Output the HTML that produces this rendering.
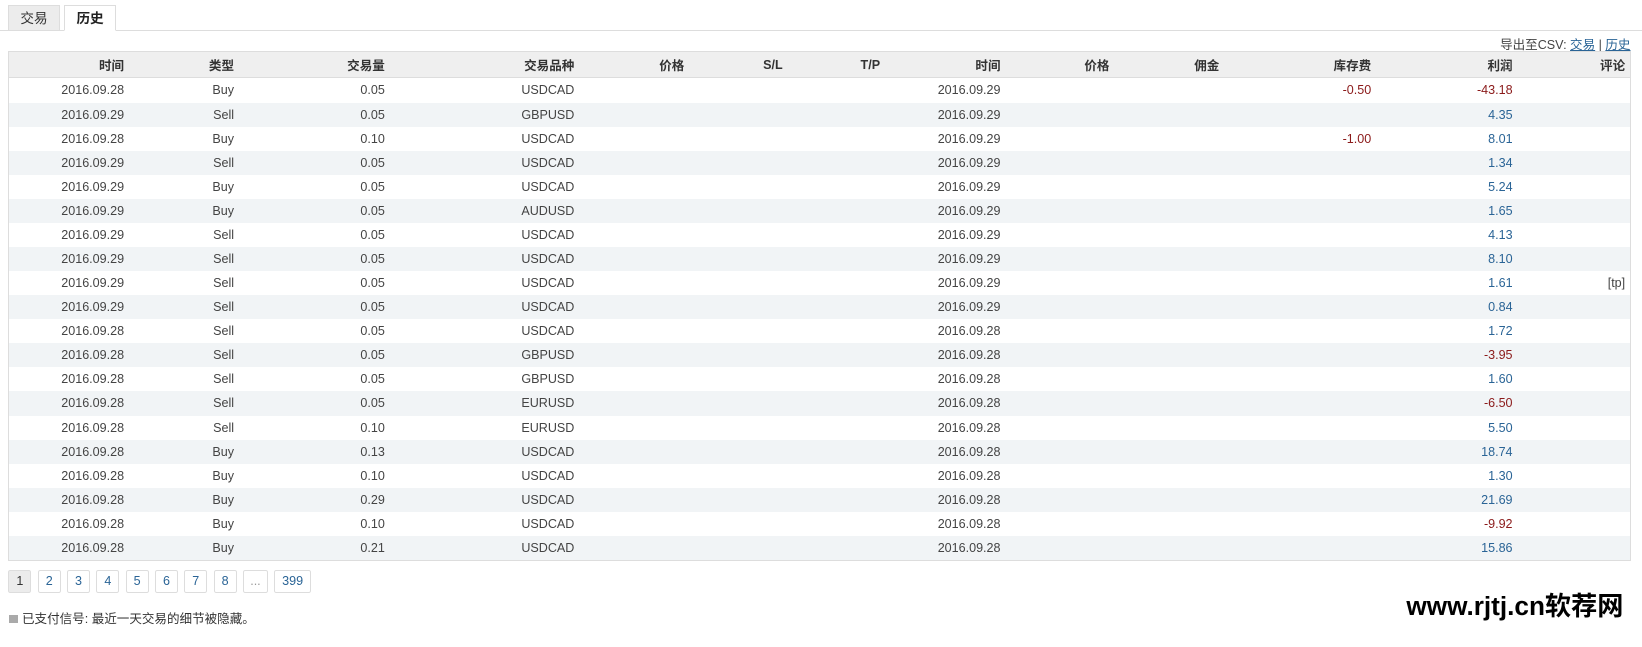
<!DOCTYPE html>
<html><head><meta charset="utf-8"><style>
html,body{margin:0;padding:0;background:#fff;}
body{zoom:1.04719;width:1568px;height:618px;position:relative;overflow:hidden;font-family:"Liberation Sans","Noto Sans CJK SC",sans-serif;font-size:12px;color:#444;}
.tab{position:absolute;top:5px;height:24px;line-height:24px;text-align:center;font-size:13px;box-sizing:border-box;}
.t1{left:8px;width:49px;background:#ececec;border:1px solid #ddd;border-bottom:none;color:#333;}
.t2{left:61px;width:50px;background:#fff;border:1px solid #ddd;border-bottom:1px solid #fff;font-weight:bold;color:#222;z-index:2;height:25px;}
.line{position:absolute;left:0;top:29px;width:1568px;height:1px;background:#ddd;}
.exp{position:absolute;right:11px;top:32px;color:#444;}
.exp a{color:#2a6496;text-decoration:underline;}
table{position:absolute;left:8px;top:49px;border-collapse:collapse;table-layout:fixed;width:1549px;border:1px solid #ddd;}
td,th{text-align:right;padding:0 5px 0 0;white-space:nowrap;overflow:hidden;}
th{height:24px;background:#efefef;border-bottom:1px solid #ddd;font-weight:bold;color:#333;}
td{height:23px;color:#444;}
tr:nth-child(odd) td{background:#f1f4f6;}
.n{color:#8b1a1a;}.p{color:#2a6496;}
.pg{position:absolute;top:544px;left:8px;white-space:nowrap;}
.pg span{display:inline-block;box-sizing:border-box;height:22px;line-height:20px;width:22px;text-align:center;border:1px solid #ddd;border-radius:2px;margin-right:6px;color:#2a6496;font-size:12px;}
.pg span.a{background:#ececec;color:#333;}
.note{position:absolute;left:9px;top:581px;color:#333;}
.ic{display:inline-block;width:8px;height:8px;background:#aaa;margin-right:4px;vertical-align:0;}
.wm{position:absolute;left:1343px;top:559px;font-size:25px;font-weight:bold;color:#000;font-family:"Liberation Sans","Noto Sans CJK SC",sans-serif;white-space:nowrap;letter-spacing:0px;}
</style></head><body>
<div class="line"></div>
<div class="tab t1">交易</div>
<div class="tab t2">历史</div>
<div class="exp">导出至CSV: <a>交易</a> | <a>历史</a></div>
<table>
<colgroup><col style="width:115px"><col style="width:105px"><col style="width:144px"><col style="width:181px"><col style="width:105px"><col style="width:94px"><col style="width:93px"><col style="width:115px"><col style="width:104px"><col style="width:105px"><col style="width:145px"><col style="width:135px"><col style="width:108px"></colgroup>
<tr><th>时间</th><th>类型</th><th>交易量</th><th>交易品种</th><th>价格</th><th>S/L</th><th>T/P</th><th>时间</th><th>价格</th><th>佣金</th><th>库存费</th><th>利润</th><th>评论</th></tr>
<tr><td>2016.09.28</td><td>Buy</td><td>0.05</td><td>USDCAD</td><td></td><td></td><td></td><td>2016.09.29</td><td></td><td></td><td class="n">-0.50</td><td class="n">-43.18</td><td></td></tr>
<tr><td>2016.09.29</td><td>Sell</td><td>0.05</td><td>GBPUSD</td><td></td><td></td><td></td><td>2016.09.29</td><td></td><td></td><td></td><td class="p">4.35</td><td></td></tr>
<tr><td>2016.09.28</td><td>Buy</td><td>0.10</td><td>USDCAD</td><td></td><td></td><td></td><td>2016.09.29</td><td></td><td></td><td class="n">-1.00</td><td class="p">8.01</td><td></td></tr>
<tr><td>2016.09.29</td><td>Sell</td><td>0.05</td><td>USDCAD</td><td></td><td></td><td></td><td>2016.09.29</td><td></td><td></td><td></td><td class="p">1.34</td><td></td></tr>
<tr><td>2016.09.29</td><td>Buy</td><td>0.05</td><td>USDCAD</td><td></td><td></td><td></td><td>2016.09.29</td><td></td><td></td><td></td><td class="p">5.24</td><td></td></tr>
<tr><td>2016.09.29</td><td>Buy</td><td>0.05</td><td>AUDUSD</td><td></td><td></td><td></td><td>2016.09.29</td><td></td><td></td><td></td><td class="p">1.65</td><td></td></tr>
<tr><td>2016.09.29</td><td>Sell</td><td>0.05</td><td>USDCAD</td><td></td><td></td><td></td><td>2016.09.29</td><td></td><td></td><td></td><td class="p">4.13</td><td></td></tr>
<tr><td>2016.09.29</td><td>Sell</td><td>0.05</td><td>USDCAD</td><td></td><td></td><td></td><td>2016.09.29</td><td></td><td></td><td></td><td class="p">8.10</td><td></td></tr>
<tr><td>2016.09.29</td><td>Sell</td><td>0.05</td><td>USDCAD</td><td></td><td></td><td></td><td>2016.09.29</td><td></td><td></td><td></td><td class="p">1.61</td><td>[tp]</td></tr>
<tr><td>2016.09.29</td><td>Sell</td><td>0.05</td><td>USDCAD</td><td></td><td></td><td></td><td>2016.09.29</td><td></td><td></td><td></td><td class="p">0.84</td><td></td></tr>
<tr><td>2016.09.28</td><td>Sell</td><td>0.05</td><td>USDCAD</td><td></td><td></td><td></td><td>2016.09.28</td><td></td><td></td><td></td><td class="p">1.72</td><td></td></tr>
<tr><td>2016.09.28</td><td>Sell</td><td>0.05</td><td>GBPUSD</td><td></td><td></td><td></td><td>2016.09.28</td><td></td><td></td><td></td><td class="n">-3.95</td><td></td></tr>
<tr><td>2016.09.28</td><td>Sell</td><td>0.05</td><td>GBPUSD</td><td></td><td></td><td></td><td>2016.09.28</td><td></td><td></td><td></td><td class="p">1.60</td><td></td></tr>
<tr><td>2016.09.28</td><td>Sell</td><td>0.05</td><td>EURUSD</td><td></td><td></td><td></td><td>2016.09.28</td><td></td><td></td><td></td><td class="n">-6.50</td><td></td></tr>
<tr><td>2016.09.28</td><td>Sell</td><td>0.10</td><td>EURUSD</td><td></td><td></td><td></td><td>2016.09.28</td><td></td><td></td><td></td><td class="p">5.50</td><td></td></tr>
<tr><td>2016.09.28</td><td>Buy</td><td>0.13</td><td>USDCAD</td><td></td><td></td><td></td><td>2016.09.28</td><td></td><td></td><td></td><td class="p">18.74</td><td></td></tr>
<tr><td>2016.09.28</td><td>Buy</td><td>0.10</td><td>USDCAD</td><td></td><td></td><td></td><td>2016.09.28</td><td></td><td></td><td></td><td class="p">1.30</td><td></td></tr>
<tr><td>2016.09.28</td><td>Buy</td><td>0.29</td><td>USDCAD</td><td></td><td></td><td></td><td>2016.09.28</td><td></td><td></td><td></td><td class="p">21.69</td><td></td></tr>
<tr><td>2016.09.28</td><td>Buy</td><td>0.10</td><td>USDCAD</td><td></td><td></td><td></td><td>2016.09.28</td><td></td><td></td><td></td><td class="n">-9.92</td><td></td></tr>
<tr><td>2016.09.28</td><td>Buy</td><td>0.21</td><td>USDCAD</td><td></td><td></td><td></td><td>2016.09.28</td><td></td><td></td><td></td><td class="p">15.86</td><td></td></tr>
</table>
<div class="pg"><span class="a">1</span><span>2</span><span>3</span><span>4</span><span>5</span><span>6</span><span>7</span><span>8</span><span style="width:24px;color:#999">...</span><span style="width:35px">399</span></div>
<div class="note"><span class="ic"></span>已支付信号: 最近一天交易的细节被隐藏。</div>
<div class="wm">www.rjtj.cn软荐网</div>
</body></html>
